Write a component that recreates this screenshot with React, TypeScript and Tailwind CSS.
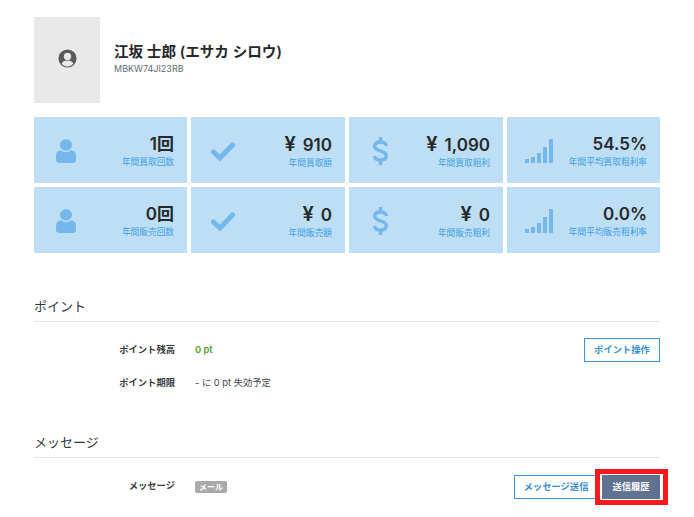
import type {ReactNode} from 'react'

const font = 'font-[Inter,"Noto_Sans_CJK_JP",sans-serif]'

function PersonIcon() {
  return (
    <svg viewBox="0 0 20 25" className="h-[24px] w-[20px]" fill="#74b7ea" aria-hidden="true" preserveAspectRatio="none">
      <circle cx="10" cy="6.200" r="6" />
      <path d="M5 11.800c1.300 1.300 3 2 5 2s3.700-.7 5-2c2.800.3 5 2 5 5v5.200c0 1.700-1.300 3-3 3H3c-1.700 0-3-1.300-3-3v-5.200c0-3 2.200-4.700 5-5z" />
    </svg>
  )
}

function CheckIcon() {
  return (
    <svg viewBox="0 0 24 19" className="h-[19px] w-[24px]" fill="none" stroke="#74b7ea" strokeWidth="5" strokeLinecap="round" strokeLinejoin="miter" aria-hidden="true">
      <path d="M2.500 10l6.500 6L21.500 3" />
    </svg>
  )
}

function DollarIcon() {
  return (
    <svg viewBox="0 0 15 28" className="h-[28px] w-[15px]" fill="none" stroke="#74b7ea" strokeWidth="3.400" aria-hidden="true">
      <path d="M7.500 0v5M7.500 23v5" />
      <path d="M13.500 9C13 6.500 11 5 7.500 5S1.700 6.500 1.700 9.200c0 5.800 11.600 3.300 11.600 9.600 0 2.700-2.300 4.200-5.800 4.200S1.800 21.500 1.400 19" />
    </svg>
  )
}

function BarsIcon() {
  return (
    <svg viewBox="0 0 28 24" className="h-[24px] w-[28px]" fill="#74b7ea" aria-hidden="true">
      <rect x="0" y="20" width="4" height="4" />
      <rect x="6" y="18" width="4" height="6" />
      <rect x="12" y="14" width="4" height="10" />
      <rect x="18" y="8" width="4" height="16" />
      <rect x="24" y="0" width="4" height="24" />
    </svg>
  )
}

function StatCard({icon, value, label}: {icon: ReactNode; value: string; label: string}) {
  const isYen = value.startsWith('¥')
  const isCount = value.endsWith('回')
  return (
    <div className="flex h-[66px] items-center justify-between bg-[#bddef5] pl-[16px] pr-[13px]">
      <div className="flex w-[31px] justify-center pt-[2px]">{icon}</div>
      <div className="flex flex-col items-end pt-[2px]">
        <span className="text-[17px] font-semibold leading-[20px] text-[#26292c]">
          {isYen && <span className="mr-[7px] text-[20px]">¥</span>}
          {isYen ? value.slice(2) : isCount ? value.slice(0, -1) : value}
          {isCount && <span className="text-[17px]">回</span>}
        </span>
        <span className="mt-[2px] text-[8.700px] leading-[12px] text-[#3f9fe3]">{label}</span>
      </div>
    </div>
  )
}

function SectionTitle({children}: {children: ReactNode}) {
  return (
    <h2 className="border-b border-[#e2e4ea] pb-[4px] text-[13px] font-normal leading-[22px] text-[#33363a]">
      {children}
    </h2>
  )
}

function OutlineButton({children}: {children: ReactNode}) {
  return (
    <button className="flex h-[24px] w-full items-center justify-center border border-[#3a97dc] bg-white text-[9.300px] font-bold text-[#3a8fd4]">
      {children}
    </button>
  )
}

export default function App() {
  return (
    <div className={`relative h-[517px] w-[694px] overflow-hidden bg-white px-[34px] pt-[17px] ${font}`}>
      <div className="flex items-center gap-[14px]">
        <div className="flex h-[86px] w-[66px] items-center justify-center bg-[#e9e9e9]">
          <svg viewBox="0 0 20 20" className="mb-[4px] h-[19px] w-[19px]" aria-hidden="true">
            <circle cx="10" cy="10" r="9.500" fill="#5a5a5a" />
            <circle cx="10" cy="7.800" r="3.800" fill="#e9e9e9" />
            <path d="M3.800 15.500c1-2.300 3-3.400 6.200-3.400s5.200 1.100 6.200 3.400c-1.500 1.700-3.700 2.800-6.200 2.800s-4.700-1.100-6.200-2.800z" fill="#e9e9e9" />
          </svg>
        </div>
        <div className="flex flex-col pb-[3px]">
          <span className="text-[14.600px] font-semibold leading-[20px] text-[#23262a]">江坂 士郎 (エサカ シロウ)</span>
          <span className="mt-[1px] text-[9px] leading-[12px] text-[#5f6b7a]">MBKW74JI23RB</span>
        </div>
      </div>

      <div className="mt-[14px] grid grid-cols-[153px_154px_154px_153px] gap-1">
        <StatCard icon={<PersonIcon />} value="1回" label="年間買取回数" />
        <StatCard icon={<CheckIcon />} value="¥ 910" label="年間買取額" />
        <StatCard icon={<DollarIcon />} value="¥ 1,090" label="年間買取粗利" />
        <StatCard icon={<BarsIcon />} value="54.5%" label="年間平均買取粗利率" />
        <StatCard icon={<PersonIcon />} value="0回" label="年間販売回数" />
        <StatCard icon={<CheckIcon />} value="¥ 0" label="年間販売額" />
        <StatCard icon={<DollarIcon />} value="¥ 0" label="年間販売粗利" />
        <StatCard icon={<BarsIcon />} value="0.0%" label="年間平均販売粗利率" />
      </div>

      <section className="mt-[42px]">
        <SectionTitle>ポイント</SectionTitle>
        <div className="mt-[16px] flex h-[24px] items-center text-[9.300px]">
          <span className="w-[141px] text-right font-bold text-[#3a3d40]">ポイント残高</span>
          <span className="ml-[20px] font-semibold text-[#4da22e]">0 pt</span>
          <div className="ml-auto w-[76px]">
            <OutlineButton>ポイント操作</OutlineButton>
          </div>
        </div>
        <div className="mt-[9px] flex h-[24px] items-center text-[9.300px]">
          <span className="w-[141px] text-right font-bold text-[#3a3d40]">ポイント期限</span>
          <span className="ml-[20px] text-[#45484c]">- に 0 pt 失効予定</span>
        </div>
      </section>

      <section className="mt-[36px]">
        <SectionTitle>メッセージ</SectionTitle>
        <div className="mt-[17px] flex h-[24px] items-center text-[9.300px]">
          <span className="mb-[2px] w-[141px] text-right font-bold text-[#3a3d40]">メッセージ</span>
          <span className="mb-[1px] ml-[20px] rounded-[2px] bg-[#a9a9a9] px-[4px] text-[8px] font-bold leading-[12px] text-white">メール</span>
          <div className="ml-auto flex gap-1">
            <div className="w-[84px]">
              <OutlineButton>メッセージ送信</OutlineButton>
            </div>
            <button className="h-[24px] w-[58px] bg-[#5f7391] text-[9.300px] font-bold text-white">送信履歴</button>
          </div>
        </div>
      </section>

      {/* annotation box over the history button */}
      <div className="absolute left-[595px] top-[469px] h-[36px] w-[73px] border-[5px] border-[#fa1a1e]" />
    </div>
  )
}
